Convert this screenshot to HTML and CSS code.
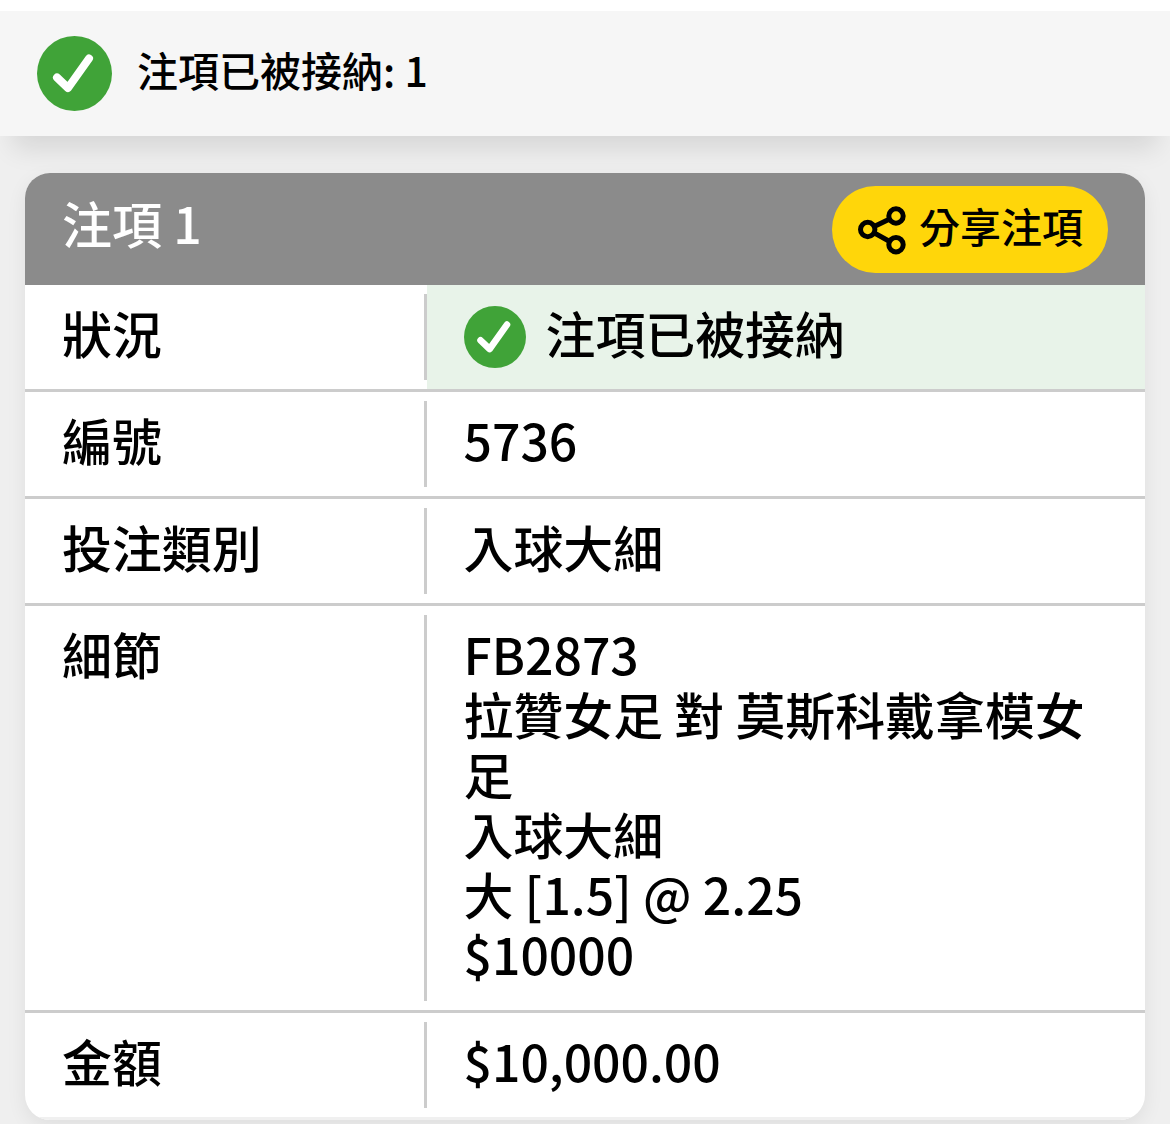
FILE: index.html
```html
<!DOCTYPE html>
<html lang="zh-Hant">
<head>
<meta charset="utf-8">
<title>注項</title>
<link rel="stylesheet" href="styles.css">
</head>
<body>
<header class="banner">
  <svg class="check-large" viewBox="0 0 75 75"><circle cx="37.500" cy="37.500" r="37.500"/><path d="M20 41.500 31 52 52 22.500"/></svg>
  <p class="banner-text">注項已被接納: 1</p>
</header>
<main class="card">
  <div class="card-head">
    <h1 class="card-title">注項 1</h1>
    <button class="share"><svg class="share-icon" viewBox="0 0 48 50"><path d="M38 11 10 24.500 38 40"/><circle cx="38" cy="11" r="7.200"/><circle cx="9.700" cy="24.500" r="7.200"/><circle cx="38" cy="39.700" r="7.200"/></svg><span class="share-text">分享注項</span></button>
  </div>
  <div class="row"><div class="label">狀況</div><div class="value accepted"><svg class="check-small" viewBox="0 0 75 75"><circle cx="37.500" cy="37.500" r="37.500"/><path d="M20 41.500 31 52 52 22.500"/></svg><span>注項已被接納</span></div></div>
  <div class="row"><div class="label">編號</div><div class="value">5736</div></div>
  <div class="row"><div class="label">投注類別</div><div class="value">入球大細</div></div>
  <div class="row details"><div class="label">細節</div><div class="value">FB2873<br>拉贊女足 對 莫斯科戴拿模女足<br>入球大細<br>大 [1.5] @ 2.25<br>$10000</div></div>
  <div class="row last"><div class="label">金額</div><div class="value">$10,000.00</div></div>
</main>
</body>
</html>
```
FILE: styles.css
```css
* { box-sizing: border-box; }
body { margin: 0; height: 1124px; overflow: hidden; background: #efefef; border-top: 11px solid #fff; color: #000; font-family: "Noto Sans CJK TC", sans-serif; font-weight: 500; }
.banner { height: 125px; padding: 25px 37px; display: flex; align-items: flex-start; background: #f6f6f6; box-shadow: 0 25px 25px -13px rgba(0,0,0,.11); }
.check-large { width: 75px; height: 75px; }
.check-large circle, .check-small circle { fill: #40a338; }
.check-large path, .check-small path { fill: none; stroke: #fff; stroke-width: 8; stroke-linecap: round; stroke-linejoin: round; }
.banner-text { margin: 3px 0 0 25px; font-size: 41px; line-height: 60px; }
.card { width: 1120px; height: 947px; margin: 37px 25px 0; border-radius: 25px; overflow: hidden; background: #fff; box-shadow: 0 6px 20px rgba(0,0,0,.07); }
.card-head { height: 112px; padding: 13px 37px 0; display: flex; justify-content: space-between; background: #8b8b8b; }
.card-title { margin: 6px 0 0; color: #fff; font-size: 50px; line-height: 60px; font-weight: 500; }
.share { width: 276px; height: 87px; padding: 0 0 0 26px; display: flex; align-items: center; border: 0; border-radius: 44px; background: #ffd60a; color: #000; font: inherit; }
.share-icon { width: 48px; height: 50px; }
.share-icon circle { fill: #ffd60a; stroke: #000; stroke-width: 5; }
.share-icon path { fill: none; stroke: #000; stroke-width: 5; }
.share-text { margin: -9px 0 0 13px; font-size: 41px; line-height: 60px; }
.row { height: 107px; display: grid; grid-template-columns: 402px 1fr; border-bottom: 3px solid #ccc; font-size: 49.9px; line-height: 60px; }
.label { margin: 9px 0; padding: 8px 0 0 37px; border-right: 3px solid #ccc; }
.value { padding: 17px 37px 0 36.5px; }
.accepted { display: flex; background: #e8f3e9; }
.check-small { width: 62px; height: 62px; margin: 4px 20px 0 .5px; }
.accepted span { margin-left: -.5px; }
.details { height: 407px; }
.last { border-bottom-color: #f0f0f0; }
```
